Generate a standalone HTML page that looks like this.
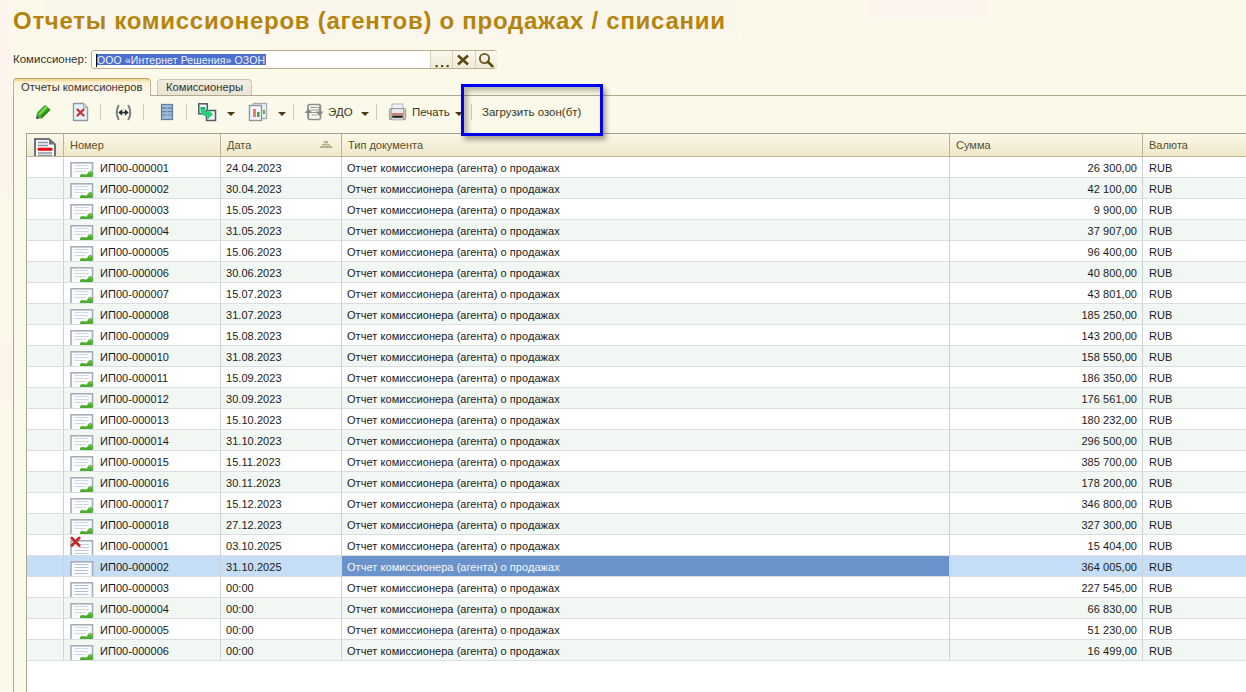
<!DOCTYPE html>
<html><head><meta charset="utf-8"><style>
*{margin:0;padding:0;box-sizing:border-box}
html,body{width:1246px;height:692px;overflow:hidden}
body{background:#fbf9ea;font-family:"Liberation Sans",sans-serif;color:#222;position:relative}
.abs{position:absolute}
.title{position:absolute;left:13px;top:5px;font-size:24px;letter-spacing:0.72px;font-weight:bold;color:#b5840e;white-space:nowrap;line-height:32px}
.lbl{position:absolute;left:13px;top:52px;font-size:11.5px;color:#333;line-height:14px}
.inp{position:absolute;left:91px;top:50px;width:406px;height:19px;border:1px solid #b7ae8c;border-radius:3px;background:#fff}
.seltext{position:absolute;left:4px;top:3px;height:11px;overflow:hidden;background:#4a6fcc;color:#eef2ff;font-size:10.5px;letter-spacing:0.12px;line-height:12px;padding:0 1px 0 1px;white-space:nowrap}
.caret{position:absolute;left:4px;top:3px;width:1px;height:13px;background:#000}
.btn{position:absolute;top:0;height:17px;background:linear-gradient(#fbf9f0,#efebd8);border-left:1px solid #d8d2b8}
.tab1{position:absolute;left:13px;top:78px;width:138px;height:18px;border:1px solid #bdb595;border-top-color:#b9a476;border-bottom:none;border-radius:4px 4px 0 0;background:linear-gradient(#f5d890 0,#f5d890 1px,#faf1d8 3px,#fbf9ec 100%);font-size:11.2px;color:#333;padding:1px 0 0 7px;line-height:14px}
.tab2{position:absolute;left:157px;top:79px;width:95px;height:17px;border:1px solid #cdc7b3;border-bottom:none;border-radius:4px 4px 0 0;background:linear-gradient(#f1ede0,#e8e3d3);font-size:11.2px;color:#333;padding:1px 0 0 8px;line-height:13px}
.hline{position:absolute;height:1px;background:#aea98b}
.vline{position:absolute;width:1px;background:#a9a690}
.tb{position:absolute;font-size:11.5px;color:#3a3622;line-height:14px}
.sep{position:absolute;top:104px;width:1px;height:16px;background:#cfcbb8}
.arr{position:absolute;top:112px;width:0;height:0;border-left:4px solid transparent;border-right:4px solid transparent;border-top:4px solid #4a3a10}
.table{position:absolute;left:26px;top:133px;width:1220px;height:559px;background:#fff;border-left:1px solid #a9a690;border-top:1px solid #a6a184}
.hdr{position:absolute;left:0;top:0;width:1220px;height:23px;background:linear-gradient(#fbf8e8,#f0e8cc);border-bottom:1px solid #bdb796}
.hdr div{position:absolute;top:0;height:22px;border-left:1px solid #b9b499;font-size:11px;color:#55502f;line-height:22px;padding-left:6px}
.row{position:absolute;left:27px;width:1219px;height:21px;font-size:11px;letter-spacing:0.05px;color:#1a1a1a;line-height:22px}
.row>div{position:absolute;top:0;height:21px;border-bottom:1px solid #d9dfe0;white-space:nowrap;overflow:hidden}
.row.alt>div{background:#f1f7f3}
.row.sel>div,.row.sel>.c0{background:#c6ddf6}
.row.sel>.c3{background:#6b93cb;color:#f4f8ff}
.c0{left:0;width:36px}
.c1{left:36px;width:157px;border-left:1px solid #cdd3d6;padding-left:36px}
.c2{left:193px;width:121px;border-left:1px solid #cdd3d6;padding-left:5px}
.c3{left:314px;width:608px;border-left:1px solid #cdd3d6;padding-left:5px}
.c4{left:922px;width:193px;border-left:1px solid #cdd3d6;text-align:right;padding-right:5px}
.c5{left:1115px;width:104px;border-left:1px solid #cdd3d6;padding-left:6px}
.di{position:absolute;left:6px;top:5px}
</style></head><body>
<div class="abs" style="left:0;top:0;width:12px;height:80px;background:linear-gradient(to right,#fcf4ed 70%,rgba(251,249,236,0))"></div>
<div class="abs" style="left:0;top:80px;width:12px;height:130px;background:linear-gradient(#fcf4ed,#fcf4ed 80%,rgba(252,244,237,0))"></div>
<div class="abs" style="left:0;top:340px;width:11px;height:64px;background:#fcf4ed"></div>
<div class="abs" style="left:45px;top:0;width:693px;height:50px;background:linear-gradient(#fbf6ec,#fbf6ec 60%,rgba(251,249,234,0))"></div>
<div class="abs" style="left:868px;top:0;width:119px;height:20px;background:#fcf5ed"></div>
<div class="title">Отчеты комиссионеров (агентов) о продажах / списании</div>
<div class="lbl">Комиссионер:</div>
<div class="inp"><div class="seltext">ООО «Интернет Решения» ОЗОН</div><div class="caret"></div>
<div class="btn" style="left:338px;width:22px"></div>
<div class="btn" style="left:360px;width:23px"></div>
<div class="btn" style="left:383px;width:22px;border-radius:0 3px 3px 0"></div>
<svg class="abs" style="left:342px;top:13px" width="16" height="4" viewBox="0 0 16 4"><rect x="1.5" y="1" width="2.2" height="2.2" fill="#5a4a14"/><rect x="7" y="1" width="2.2" height="2.2" fill="#5a4a14"/><rect x="12.5" y="1" width="2.2" height="2.2" fill="#5a4a14"/></svg>
<svg class="abs" style="left:364px;top:3px" width="14" height="12" viewBox="0 0 14 12"><path d="M2 1.5 L12 10.5 M12 1.5 L2 10.5" stroke="#5a4812" stroke-width="2.6"/></svg>
<svg class="abs" style="left:385px;top:0px" width="18" height="18" viewBox="0 0 18 18"><circle cx="7.5" cy="7.5" r="4.6" fill="none" stroke="#6a5a1e" stroke-width="1.9"/><path d="M10.8 10.8 L15.5 15.2" stroke="#5a4812" stroke-width="2.6" stroke-linecap="round"/></svg>
</div>
<div class="tab1">Отчеты комиссионеров</div>
<div class="tab2">Комиссионеры</div>
<div class="hline" style="left:151px;top:95px;width:1095px"></div>
<div class="vline" style="left:13px;top:95px;height:597px"></div>
<div class="sep" style="left:100px"></div>
<div class="sep" style="left:143px"></div>
<div class="sep" style="left:186px"></div>
<div class="arr" style="left:227px"></div>
<div class="arr" style="left:278px"></div>
<div class="sep" style="left:293px"></div>
<div class="tb" style="left:328px;top:105px">ЭДО</div>
<div class="arr" style="left:361px"></div>
<div class="sep" style="left:376px"></div>
<div class="tb" style="left:412px;top:105px">Печать</div>
<div class="arr" style="left:455px"></div>
<div class="sep" style="left:471px"></div>
<div class="tb" style="left:482px;top:105px">Загрузить озон(бт)</div>
<div class="table"><div class="hdr">
<div style="left:0;width:36px;border-left:none"></div>
<div style="left:36px;width:157px">Номер</div>
<div style="left:193px;width:121px">Дата</div>
<div style="left:314px;width:608px">Тип документа</div>
<div style="left:922px;width:193px">Сумма</div>
<div style="left:1115px;width:105px">Валюта</div>
</div></div>
<div class="row" style="top:157px"><div class="c0"></div><div class="c1"><svg class="di" width="24" height="16" viewBox="0 0 24 16"><rect x="1" y="0.8" width="21.5" height="16" fill="#fbfcfe" stroke="#a6adb8" stroke-width="1.6"/><path d="M4.5 3.5h14M4.5 6.5h14M4.5 9.5h11" stroke="#d0d6e0" stroke-width="1"/><path d="M10 16 L10 13.5 Q11 11.8 13.5 12.2 L17 12.6 Q18 9 20.5 9 Q23.2 9.5 23 12.5 Q22.6 15.6 20 16 Z" fill="#4cac2c"/><path d="M18.8 10.8 Q20.5 10 21.6 11.6" stroke="#90de62" stroke-width="1" fill="none"/></svg>ИП00-000001</div><div class="c2">24.04.2023</div><div class="c3">Отчет комиссионера (агента) о продажах</div><div class="c4">26 300,00</div><div class="c5">RUB</div></div><div class="row alt" style="top:178px"><div class="c0"></div><div class="c1"><svg class="di" width="24" height="16" viewBox="0 0 24 16"><rect x="1" y="0.8" width="21.5" height="16" fill="#fbfcfe" stroke="#a6adb8" stroke-width="1.6"/><path d="M4.5 3.5h14M4.5 6.5h14M4.5 9.5h11" stroke="#d0d6e0" stroke-width="1"/><path d="M10 16 L10 13.5 Q11 11.8 13.5 12.2 L17 12.6 Q18 9 20.5 9 Q23.2 9.5 23 12.5 Q22.6 15.6 20 16 Z" fill="#4cac2c"/><path d="M18.8 10.8 Q20.5 10 21.6 11.6" stroke="#90de62" stroke-width="1" fill="none"/></svg>ИП00-000002</div><div class="c2">30.04.2023</div><div class="c3">Отчет комиссионера (агента) о продажах</div><div class="c4">42 100,00</div><div class="c5">RUB</div></div><div class="row" style="top:199px"><div class="c0"></div><div class="c1"><svg class="di" width="24" height="16" viewBox="0 0 24 16"><rect x="1" y="0.8" width="21.5" height="16" fill="#fbfcfe" stroke="#a6adb8" stroke-width="1.6"/><path d="M4.5 3.5h14M4.5 6.5h14M4.5 9.5h11" stroke="#d0d6e0" stroke-width="1"/><path d="M10 16 L10 13.5 Q11 11.8 13.5 12.2 L17 12.6 Q18 9 20.5 9 Q23.2 9.5 23 12.5 Q22.6 15.6 20 16 Z" fill="#4cac2c"/><path d="M18.8 10.8 Q20.5 10 21.6 11.6" stroke="#90de62" stroke-width="1" fill="none"/></svg>ИП00-000003</div><div class="c2">15.05.2023</div><div class="c3">Отчет комиссионера (агента) о продажах</div><div class="c4">9 900,00</div><div class="c5">RUB</div></div><div class="row alt" style="top:220px"><div class="c0"></div><div class="c1"><svg class="di" width="24" height="16" viewBox="0 0 24 16"><rect x="1" y="0.8" width="21.5" height="16" fill="#fbfcfe" stroke="#a6adb8" stroke-width="1.6"/><path d="M4.5 3.5h14M4.5 6.5h14M4.5 9.5h11" stroke="#d0d6e0" stroke-width="1"/><path d="M10 16 L10 13.5 Q11 11.8 13.5 12.2 L17 12.6 Q18 9 20.5 9 Q23.2 9.5 23 12.5 Q22.6 15.6 20 16 Z" fill="#4cac2c"/><path d="M18.8 10.8 Q20.5 10 21.6 11.6" stroke="#90de62" stroke-width="1" fill="none"/></svg>ИП00-000004</div><div class="c2">31.05.2023</div><div class="c3">Отчет комиссионера (агента) о продажах</div><div class="c4">37 907,00</div><div class="c5">RUB</div></div><div class="row" style="top:241px"><div class="c0"></div><div class="c1"><svg class="di" width="24" height="16" viewBox="0 0 24 16"><rect x="1" y="0.8" width="21.5" height="16" fill="#fbfcfe" stroke="#a6adb8" stroke-width="1.6"/><path d="M4.5 3.5h14M4.5 6.5h14M4.5 9.5h11" stroke="#d0d6e0" stroke-width="1"/><path d="M10 16 L10 13.5 Q11 11.8 13.5 12.2 L17 12.6 Q18 9 20.5 9 Q23.2 9.5 23 12.5 Q22.6 15.6 20 16 Z" fill="#4cac2c"/><path d="M18.8 10.8 Q20.5 10 21.6 11.6" stroke="#90de62" stroke-width="1" fill="none"/></svg>ИП00-000005</div><div class="c2">15.06.2023</div><div class="c3">Отчет комиссионера (агента) о продажах</div><div class="c4">96 400,00</div><div class="c5">RUB</div></div><div class="row alt" style="top:262px"><div class="c0"></div><div class="c1"><svg class="di" width="24" height="16" viewBox="0 0 24 16"><rect x="1" y="0.8" width="21.5" height="16" fill="#fbfcfe" stroke="#a6adb8" stroke-width="1.6"/><path d="M4.5 3.5h14M4.5 6.5h14M4.5 9.5h11" stroke="#d0d6e0" stroke-width="1"/><path d="M10 16 L10 13.5 Q11 11.8 13.5 12.2 L17 12.6 Q18 9 20.5 9 Q23.2 9.5 23 12.5 Q22.6 15.6 20 16 Z" fill="#4cac2c"/><path d="M18.8 10.8 Q20.5 10 21.6 11.6" stroke="#90de62" stroke-width="1" fill="none"/></svg>ИП00-000006</div><div class="c2">30.06.2023</div><div class="c3">Отчет комиссионера (агента) о продажах</div><div class="c4">40 800,00</div><div class="c5">RUB</div></div><div class="row" style="top:283px"><div class="c0"></div><div class="c1"><svg class="di" width="24" height="16" viewBox="0 0 24 16"><rect x="1" y="0.8" width="21.5" height="16" fill="#fbfcfe" stroke="#a6adb8" stroke-width="1.6"/><path d="M4.5 3.5h14M4.5 6.5h14M4.5 9.5h11" stroke="#d0d6e0" stroke-width="1"/><path d="M10 16 L10 13.5 Q11 11.8 13.5 12.2 L17 12.6 Q18 9 20.5 9 Q23.2 9.5 23 12.5 Q22.6 15.6 20 16 Z" fill="#4cac2c"/><path d="M18.8 10.8 Q20.5 10 21.6 11.6" stroke="#90de62" stroke-width="1" fill="none"/></svg>ИП00-000007</div><div class="c2">15.07.2023</div><div class="c3">Отчет комиссионера (агента) о продажах</div><div class="c4">43 801,00</div><div class="c5">RUB</div></div><div class="row alt" style="top:304px"><div class="c0"></div><div class="c1"><svg class="di" width="24" height="16" viewBox="0 0 24 16"><rect x="1" y="0.8" width="21.5" height="16" fill="#fbfcfe" stroke="#a6adb8" stroke-width="1.6"/><path d="M4.5 3.5h14M4.5 6.5h14M4.5 9.5h11" stroke="#d0d6e0" stroke-width="1"/><path d="M10 16 L10 13.5 Q11 11.8 13.5 12.2 L17 12.6 Q18 9 20.5 9 Q23.2 9.5 23 12.5 Q22.6 15.6 20 16 Z" fill="#4cac2c"/><path d="M18.8 10.8 Q20.5 10 21.6 11.6" stroke="#90de62" stroke-width="1" fill="none"/></svg>ИП00-000008</div><div class="c2">31.07.2023</div><div class="c3">Отчет комиссионера (агента) о продажах</div><div class="c4">185 250,00</div><div class="c5">RUB</div></div><div class="row" style="top:325px"><div class="c0"></div><div class="c1"><svg class="di" width="24" height="16" viewBox="0 0 24 16"><rect x="1" y="0.8" width="21.5" height="16" fill="#fbfcfe" stroke="#a6adb8" stroke-width="1.6"/><path d="M4.5 3.5h14M4.5 6.5h14M4.5 9.5h11" stroke="#d0d6e0" stroke-width="1"/><path d="M10 16 L10 13.5 Q11 11.8 13.5 12.2 L17 12.6 Q18 9 20.5 9 Q23.2 9.5 23 12.5 Q22.6 15.6 20 16 Z" fill="#4cac2c"/><path d="M18.8 10.8 Q20.5 10 21.6 11.6" stroke="#90de62" stroke-width="1" fill="none"/></svg>ИП00-000009</div><div class="c2">15.08.2023</div><div class="c3">Отчет комиссионера (агента) о продажах</div><div class="c4">143 200,00</div><div class="c5">RUB</div></div><div class="row alt" style="top:346px"><div class="c0"></div><div class="c1"><svg class="di" width="24" height="16" viewBox="0 0 24 16"><rect x="1" y="0.8" width="21.5" height="16" fill="#fbfcfe" stroke="#a6adb8" stroke-width="1.6"/><path d="M4.5 3.5h14M4.5 6.5h14M4.5 9.5h11" stroke="#d0d6e0" stroke-width="1"/><path d="M10 16 L10 13.5 Q11 11.8 13.5 12.2 L17 12.6 Q18 9 20.5 9 Q23.2 9.5 23 12.5 Q22.6 15.6 20 16 Z" fill="#4cac2c"/><path d="M18.8 10.8 Q20.5 10 21.6 11.6" stroke="#90de62" stroke-width="1" fill="none"/></svg>ИП00-000010</div><div class="c2">31.08.2023</div><div class="c3">Отчет комиссионера (агента) о продажах</div><div class="c4">158 550,00</div><div class="c5">RUB</div></div><div class="row" style="top:367px"><div class="c0"></div><div class="c1"><svg class="di" width="24" height="16" viewBox="0 0 24 16"><rect x="1" y="0.8" width="21.5" height="16" fill="#fbfcfe" stroke="#a6adb8" stroke-width="1.6"/><path d="M4.5 3.5h14M4.5 6.5h14M4.5 9.5h11" stroke="#d0d6e0" stroke-width="1"/><path d="M10 16 L10 13.5 Q11 11.8 13.5 12.2 L17 12.6 Q18 9 20.5 9 Q23.2 9.5 23 12.5 Q22.6 15.6 20 16 Z" fill="#4cac2c"/><path d="M18.8 10.8 Q20.5 10 21.6 11.6" stroke="#90de62" stroke-width="1" fill="none"/></svg>ИП00-000011</div><div class="c2">15.09.2023</div><div class="c3">Отчет комиссионера (агента) о продажах</div><div class="c4">186 350,00</div><div class="c5">RUB</div></div><div class="row alt" style="top:388px"><div class="c0"></div><div class="c1"><svg class="di" width="24" height="16" viewBox="0 0 24 16"><rect x="1" y="0.8" width="21.5" height="16" fill="#fbfcfe" stroke="#a6adb8" stroke-width="1.6"/><path d="M4.5 3.5h14M4.5 6.5h14M4.5 9.5h11" stroke="#d0d6e0" stroke-width="1"/><path d="M10 16 L10 13.5 Q11 11.8 13.5 12.2 L17 12.6 Q18 9 20.5 9 Q23.2 9.5 23 12.5 Q22.6 15.6 20 16 Z" fill="#4cac2c"/><path d="M18.8 10.8 Q20.5 10 21.6 11.6" stroke="#90de62" stroke-width="1" fill="none"/></svg>ИП00-000012</div><div class="c2">30.09.2023</div><div class="c3">Отчет комиссионера (агента) о продажах</div><div class="c4">176 561,00</div><div class="c5">RUB</div></div><div class="row" style="top:409px"><div class="c0"></div><div class="c1"><svg class="di" width="24" height="16" viewBox="0 0 24 16"><rect x="1" y="0.8" width="21.5" height="16" fill="#fbfcfe" stroke="#a6adb8" stroke-width="1.6"/><path d="M4.5 3.5h14M4.5 6.5h14M4.5 9.5h11" stroke="#d0d6e0" stroke-width="1"/><path d="M10 16 L10 13.5 Q11 11.8 13.5 12.2 L17 12.6 Q18 9 20.5 9 Q23.2 9.5 23 12.5 Q22.6 15.6 20 16 Z" fill="#4cac2c"/><path d="M18.8 10.8 Q20.5 10 21.6 11.6" stroke="#90de62" stroke-width="1" fill="none"/></svg>ИП00-000013</div><div class="c2">15.10.2023</div><div class="c3">Отчет комиссионера (агента) о продажах</div><div class="c4">180 232,00</div><div class="c5">RUB</div></div><div class="row alt" style="top:430px"><div class="c0"></div><div class="c1"><svg class="di" width="24" height="16" viewBox="0 0 24 16"><rect x="1" y="0.8" width="21.5" height="16" fill="#fbfcfe" stroke="#a6adb8" stroke-width="1.6"/><path d="M4.5 3.5h14M4.5 6.5h14M4.5 9.5h11" stroke="#d0d6e0" stroke-width="1"/><path d="M10 16 L10 13.5 Q11 11.8 13.5 12.2 L17 12.6 Q18 9 20.5 9 Q23.2 9.5 23 12.5 Q22.6 15.6 20 16 Z" fill="#4cac2c"/><path d="M18.8 10.8 Q20.5 10 21.6 11.6" stroke="#90de62" stroke-width="1" fill="none"/></svg>ИП00-000014</div><div class="c2">31.10.2023</div><div class="c3">Отчет комиссионера (агента) о продажах</div><div class="c4">296 500,00</div><div class="c5">RUB</div></div><div class="row" style="top:451px"><div class="c0"></div><div class="c1"><svg class="di" width="24" height="16" viewBox="0 0 24 16"><rect x="1" y="0.8" width="21.5" height="16" fill="#fbfcfe" stroke="#a6adb8" stroke-width="1.6"/><path d="M4.5 3.5h14M4.5 6.5h14M4.5 9.5h11" stroke="#d0d6e0" stroke-width="1"/><path d="M10 16 L10 13.5 Q11 11.8 13.5 12.2 L17 12.6 Q18 9 20.5 9 Q23.2 9.5 23 12.5 Q22.6 15.6 20 16 Z" fill="#4cac2c"/><path d="M18.8 10.8 Q20.5 10 21.6 11.6" stroke="#90de62" stroke-width="1" fill="none"/></svg>ИП00-000015</div><div class="c2">15.11.2023</div><div class="c3">Отчет комиссионера (агента) о продажах</div><div class="c4">385 700,00</div><div class="c5">RUB</div></div><div class="row alt" style="top:472px"><div class="c0"></div><div class="c1"><svg class="di" width="24" height="16" viewBox="0 0 24 16"><rect x="1" y="0.8" width="21.5" height="16" fill="#fbfcfe" stroke="#a6adb8" stroke-width="1.6"/><path d="M4.5 3.5h14M4.5 6.5h14M4.5 9.5h11" stroke="#d0d6e0" stroke-width="1"/><path d="M10 16 L10 13.5 Q11 11.8 13.5 12.2 L17 12.6 Q18 9 20.5 9 Q23.2 9.5 23 12.5 Q22.6 15.6 20 16 Z" fill="#4cac2c"/><path d="M18.8 10.8 Q20.5 10 21.6 11.6" stroke="#90de62" stroke-width="1" fill="none"/></svg>ИП00-000016</div><div class="c2">30.11.2023</div><div class="c3">Отчет комиссионера (агента) о продажах</div><div class="c4">178 200,00</div><div class="c5">RUB</div></div><div class="row" style="top:493px"><div class="c0"></div><div class="c1"><svg class="di" width="24" height="16" viewBox="0 0 24 16"><rect x="1" y="0.8" width="21.5" height="16" fill="#fbfcfe" stroke="#a6adb8" stroke-width="1.6"/><path d="M4.5 3.5h14M4.5 6.5h14M4.5 9.5h11" stroke="#d0d6e0" stroke-width="1"/><path d="M10 16 L10 13.5 Q11 11.8 13.5 12.2 L17 12.6 Q18 9 20.5 9 Q23.2 9.5 23 12.5 Q22.6 15.6 20 16 Z" fill="#4cac2c"/><path d="M18.8 10.8 Q20.5 10 21.6 11.6" stroke="#90de62" stroke-width="1" fill="none"/></svg>ИП00-000017</div><div class="c2">15.12.2023</div><div class="c3">Отчет комиссионера (агента) о продажах</div><div class="c4">346 800,00</div><div class="c5">RUB</div></div><div class="row alt" style="top:514px"><div class="c0"></div><div class="c1"><svg class="di" width="24" height="16" viewBox="0 0 24 16"><rect x="1" y="0.8" width="21.5" height="16" fill="#fbfcfe" stroke="#a6adb8" stroke-width="1.6"/><path d="M4.5 3.5h14M4.5 6.5h14M4.5 9.5h11" stroke="#d0d6e0" stroke-width="1"/><path d="M10 16 L10 13.5 Q11 11.8 13.5 12.2 L17 12.6 Q18 9 20.5 9 Q23.2 9.5 23 12.5 Q22.6 15.6 20 16 Z" fill="#4cac2c"/><path d="M18.8 10.8 Q20.5 10 21.6 11.6" stroke="#90de62" stroke-width="1" fill="none"/></svg>ИП00-000018</div><div class="c2">27.12.2023</div><div class="c3">Отчет комиссионера (агента) о продажах</div><div class="c4">327 300,00</div><div class="c5">RUB</div></div><div class="row" style="top:535px"><div class="c0"></div><div class="c1"><svg class="di" width="24" height="21" viewBox="0 0 24 21" style="top:0"><rect x="1" y="5.8" width="21.5" height="16" fill="#fbfcfe" stroke="#a3abb8" stroke-width="1.6"/><path d="M10 9.5h9M9 12.5h10M4.5 15.5h14M4.5 18.5h14" stroke="#c2cad6" stroke-width="1"/><path d="M1.8 3 L9.2 10.5 M9.2 3 L1.8 10.5" stroke="#c42a22" stroke-width="2.8" stroke-linecap="round"/></svg>ИП00-000001</div><div class="c2">03.10.2025</div><div class="c3">Отчет комиссионера (агента) о продажах</div><div class="c4">15 404,00</div><div class="c5">RUB</div></div><div class="row alt sel" style="top:556px"><div class="c0"></div><div class="c1"><svg class="di" width="24" height="16" viewBox="0 0 24 16"><rect x="1" y="0.8" width="21.5" height="16" fill="#fbfcfe" stroke="#a3abb8" stroke-width="1.6"/><path d="M4.5 3.5h14M4.5 6.5h14M4.5 9.5h14M4.5 12.5h14" stroke="#afc0d8" stroke-width="1"/></svg>ИП00-000002</div><div class="c2">31.10.2025</div><div class="c3">Отчет комиссионера (агента) о продажах</div><div class="c4">364 005,00</div><div class="c5">RUB</div></div><div class="row" style="top:577px"><div class="c0"></div><div class="c1"><svg class="di" width="24" height="16" viewBox="0 0 24 16"><rect x="1" y="0.8" width="21.5" height="16" fill="#fbfcfe" stroke="#a3abb8" stroke-width="1.6"/><path d="M4.5 3.5h14M4.5 6.5h14M4.5 9.5h14M4.5 12.5h14" stroke="#afc0d8" stroke-width="1"/></svg>ИП00-000003</div><div class="c2">00:00</div><div class="c3">Отчет комиссионера (агента) о продажах</div><div class="c4">227 545,00</div><div class="c5">RUB</div></div><div class="row alt" style="top:598px"><div class="c0"></div><div class="c1"><svg class="di" width="24" height="16" viewBox="0 0 24 16"><rect x="1" y="0.8" width="21.5" height="16" fill="#fbfcfe" stroke="#a6adb8" stroke-width="1.6"/><path d="M4.5 3.5h14M4.5 6.5h14M4.5 9.5h11" stroke="#d0d6e0" stroke-width="1"/><path d="M10 16 L10 13.5 Q11 11.8 13.5 12.2 L17 12.6 Q18 9 20.5 9 Q23.2 9.5 23 12.5 Q22.6 15.6 20 16 Z" fill="#4cac2c"/><path d="M18.8 10.8 Q20.5 10 21.6 11.6" stroke="#90de62" stroke-width="1" fill="none"/></svg>ИП00-000004</div><div class="c2">00:00</div><div class="c3">Отчет комиссионера (агента) о продажах</div><div class="c4">66 830,00</div><div class="c5">RUB</div></div><div class="row" style="top:619px"><div class="c0"></div><div class="c1"><svg class="di" width="24" height="16" viewBox="0 0 24 16"><rect x="1" y="0.8" width="21.5" height="16" fill="#fbfcfe" stroke="#a6adb8" stroke-width="1.6"/><path d="M4.5 3.5h14M4.5 6.5h14M4.5 9.5h11" stroke="#d0d6e0" stroke-width="1"/><path d="M10 16 L10 13.5 Q11 11.8 13.5 12.2 L17 12.6 Q18 9 20.5 9 Q23.2 9.5 23 12.5 Q22.6 15.6 20 16 Z" fill="#4cac2c"/><path d="M18.8 10.8 Q20.5 10 21.6 11.6" stroke="#90de62" stroke-width="1" fill="none"/></svg>ИП00-000005</div><div class="c2">00:00</div><div class="c3">Отчет комиссионера (агента) о продажах</div><div class="c4">51 230,00</div><div class="c5">RUB</div></div><div class="row alt" style="top:640px"><div class="c0"></div><div class="c1"><svg class="di" width="24" height="16" viewBox="0 0 24 16"><rect x="1" y="0.8" width="21.5" height="16" fill="#fbfcfe" stroke="#a6adb8" stroke-width="1.6"/><path d="M4.5 3.5h14M4.5 6.5h14M4.5 9.5h11" stroke="#d0d6e0" stroke-width="1"/><path d="M10 16 L10 13.5 Q11 11.8 13.5 12.2 L17 12.6 Q18 9 20.5 9 Q23.2 9.5 23 12.5 Q22.6 15.6 20 16 Z" fill="#4cac2c"/><path d="M18.8 10.8 Q20.5 10 21.6 11.6" stroke="#90de62" stroke-width="1" fill="none"/></svg>ИП00-000006</div><div class="c2">00:00</div><div class="c3">Отчет комиссионера (агента) о продажах</div><div class="c4">16 499,00</div><div class="c5">RUB</div></div>

<svg class="abs" style="left:33px;top:103px" width="19" height="19" viewBox="0 0 19 19">
 <g transform="rotate(-45 9.5 9.5)">
  <rect x="4.5" y="5.8" width="12.5" height="7.4" rx="2.2" fill="#3aa620"/>
  <rect x="5.5" y="7.4" width="11" height="2.2" rx="1" fill="#7fe055"/>
  <rect x="4.5" y="11.4" width="12.5" height="1.8" fill="#26861a"/>
  <path d="M5 5.8 L0.8 9.5 L5 13.2 Z" fill="#5a9a48"/>
  <path d="M2.8 7.8 L0.6 9.5 L2.8 11.2 Z" fill="#243a1c"/>
 </g>
</svg>
<svg class="abs" style="left:72px;top:102px" width="17" height="20" viewBox="0 0 17 20">
 <path d="M1.5 1.5 H11.5 L15.5 5.5 V18.5 H1.5 Z" fill="#e9f4fa" stroke="#8a9aa8" stroke-width="1.4"/>
 <path d="M11.5 1.5 V5.5 H15.5" fill="#d0e0ea" stroke="#9aaab8" stroke-width="1"/>
 <path d="M5.5 7.5 L11.5 13.5 M11.5 7.5 L5.5 13.5" stroke="#c9303a" stroke-width="2.3" stroke-linecap="round"/>
</svg>
<svg class="abs" style="left:114px;top:104px" width="19" height="17" viewBox="0 0 19 17">
 <path d="M4.8 1 Q0.6 8.5 4.8 16" stroke="#7a7e80" stroke-width="2" fill="none"/>
 <path d="M14.2 1 Q18.4 8.5 14.2 16" stroke="#7a7e80" stroke-width="2" fill="none"/>
 <path d="M7 8.5 H12" stroke="#26303a" stroke-width="1.5"/>
 <path d="M4.2 8.5 L8.2 5.3 L8.2 11.7Z M14.8 8.5 L10.8 5.3 L10.8 11.7Z" fill="#26303a"/>
</svg>
<svg class="abs" style="left:160px;top:103px" width="14" height="18" viewBox="0 0 14 18">
 <rect x="1.5" y="1.5" width="11" height="15" fill="#9fbcd8" stroke="#62809e" stroke-width="1.3"/>
 <path d="M1.5 5.2h11M1.5 8.6h11M1.5 12h11" stroke="#62809e" stroke-width="1.2"/>
 <path d="M7 2v14" stroke="#b8b8e0" stroke-width="0.8"/>
</svg>
<svg class="abs" style="left:197px;top:102px" width="20" height="20" viewBox="0 0 20 20">
 <rect x="1.8" y="1.8" width="8.5" height="10" fill="#eef2fa" stroke="#555a63" stroke-width="1.5"/>
 <rect x="9.5" y="8.5" width="9" height="10" fill="#eef4fa" stroke="#555a63" stroke-width="1.5"/>
 <path d="M3.2 5 L8.2 5 L8.6 8.8 Q9 10.2 10.6 10.2 L10.2 6.8 L16 12.2 L10.2 17.8 L10.6 14.4 Q4.6 14.4 3.6 9.5 Z" fill="#26cf78"/><path d="M4 6 L7.6 6" stroke="#1a9a55" stroke-width="1"/>
</svg>
<svg class="abs" style="left:248px;top:102px" width="20" height="20" viewBox="0 0 20 20">
 <rect x="5.5" y="1.5" width="13" height="15" fill="#eef2f8" stroke="#a6adb6" stroke-width="1.4"/>
 <rect x="1.5" y="3.5" width="12" height="15" fill="#f4f6fb" stroke="#8d959e" stroke-width="1.4"/>
 <rect x="5" y="7" width="3" height="8" fill="#ee7a70"/>
 <rect x="9" y="10" width="2.5" height="5" fill="#43a043"/>
 <rect x="15" y="8" width="2" height="4" fill="#60b050"/>
</svg>
<svg class="abs" style="left:304px;top:103px" width="20" height="18" viewBox="0 0 20 18">
 <rect x="4" y="1.5" width="12.5" height="15" rx="2" fill="#fbfaf2" stroke="#8f8f86" stroke-width="1.6"/>
 <path d="M6.5 4.5h8M6.5 7h8M7.5 9.5h6M7.5 12h6" stroke="#9a9a90" stroke-width="1.2"/>
 <path d="M0.5 10 L4.5 5.5 L8.5 10Z M11.5 8.5 L15.5 13 L19.5 8.5Z" fill="#8a8a80"/><path d="M4.5 9v5.5M15.5 8.5v-5" stroke="#8a8a80" stroke-width="1.6"/>
</svg>
<svg class="abs" style="left:388px;top:103px" width="19" height="18" viewBox="0 0 19 18">
 <rect x="4" y="1" width="11" height="8" fill="#f0f2f6" stroke="#aeb3bc" stroke-width="1"/>
 <rect x="0.8" y="5" width="17.4" height="12.2" rx="2.5" fill="#9b978e"/>
 <rect x="1.5" y="6" width="2" height="10" fill="#c4c0b6"/>
 <rect x="15.5" y="6" width="2" height="10" fill="#c4c0b6"/>
 <rect x="4" y="6" width="11" height="4.5" fill="#e6e8ec"/>
 <rect x="4" y="10.2" width="11" height="1.6" fill="#e26a74"/>
 <rect x="4" y="12" width="11" height="0.9" fill="#6aa86a"/>
 <rect x="4.5" y="13" width="10" height="1.6" fill="#1a1a1a"/>
 <rect x="4" y="15" width="11" height="1.6" fill="#dcdae4"/>
</svg>
<svg class="abs" style="left:30px;top:136px" width="28" height="20" viewBox="0 0 28 20">
 <path d="M5 20 V3 H19 L25 8.5 V20" fill="#f4f8fc" stroke="#6e7278" stroke-width="2"/>
 <path d="M19 3 L25 8.5 L19 8.5Z" fill="#6e7278"/>
 <path d="M8 6.5h10M8 9.5h10M8 17h14M8 19.5h14" stroke="#8a95a2" stroke-width="1.4"/>
 <rect x="7.5" y="11.8" width="15" height="3" rx="1.2" fill="#ee0a0a"/>
</svg>
<svg class="abs" style="left:319px;top:140px" width="14" height="9" viewBox="0 0 14 9">
 <path d="M5 2.5 L9 2.5 L12.8 7.5 L1.2 7.5Z" fill="#e6dfbf"/>
 <rect x="5" y="1" width="4" height="2" fill="#b5ad80"/>
 <rect x="3" y="4" width="8" height="1.2" fill="#b8b088"/>
 <rect x="1" y="6.2" width="12" height="1.6" fill="#aaa276"/>
</svg>

<div class="abs" style="left:461px;top:84px;width:142px;height:52px;border:3px solid #0000ee;box-shadow:3px 4px 5px rgba(60,55,30,.45), inset 4px 4px 5px rgba(60,55,30,.35)"></div>
</body></html>
